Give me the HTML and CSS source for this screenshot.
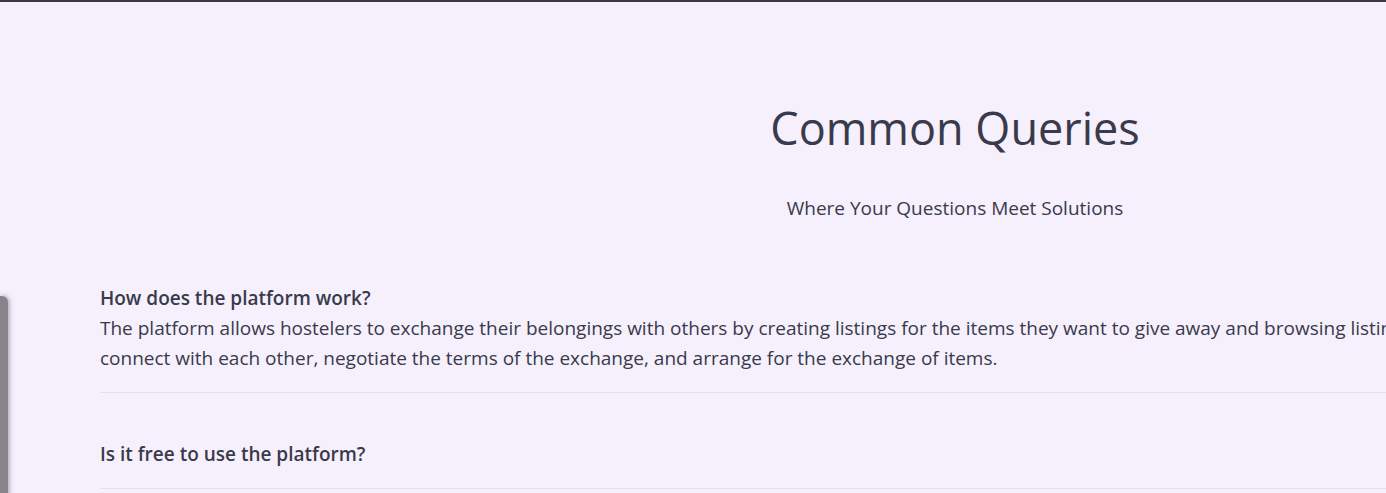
FILE: index.html
```html
<!DOCTYPE html>
<html lang="en">
<head>
<meta charset="utf-8">
<title>Common Queries</title>
<link rel="stylesheet" href="styles.css">
</head>
<body>
<div class="edge-shadow"></div>
<main class="page">
  <header class="hero">
    <h1 class="title">Common Queries</h1>
    <p class="subtitle">Where Your Questions Meet Solutions</p>
  </header>
  <section class="faq">
    <div class="faq-item">
      <h3 class="question">How does the platform work?</h3>
      <p class="answer">The platform allows hostelers to exchange their belongings with others by creating listings for the items they want to give away and browsing listings for the items they need. Users can connect with each other, negotiate the terms of the exchange, and arrange for the exchange of items.</p>
    </div>
    <div class="faq-item">
      <h3 class="question">Is it free to use the platform?</h3>
    </div>
  </section>
</main>
</body>
</html>
```
FILE: styles.css
```css
html, body {
  margin: 0;
  padding: 0;
}
body {
  background: #f5f0fc;
  border-top: 2px solid #3b3a40;
  font-family: "Open Sans", "Noto Sans", sans-serif;
  color: #393a4c;
  overflow: hidden;
  height: 491px;
  position: relative;
}
.edge-shadow {
  position: absolute;
  left: 0;
  top: 294px;
  width: 8px;
  height: 220px;
  background: #85848a;
  border-radius: 0 6px 0 0;
  box-shadow: 1px 0 5px rgba(100, 100, 105, 0.6);
}
.page {
  width: 1910px;
}
.hero {
  text-align: center;
  padding-top: 96px;
}
.title {
  margin: 0;
  font-size: 45px;
  font-weight: 400;
  line-height: 60px;
}
.subtitle {
  margin: 35px 0 0;
  font-size: 19px;
  line-height: 30px;
}
.faq {
  padding: 0 170px 0 100px;
  margin-top: 14px;
}
.faq-item {
  padding: 46px 0 19px;
  border-bottom: 1px solid #e4dfea;
}
.question {
  margin: 0;
  font-size: 19px;
  font-weight: 600;
  line-height: 30px;
}
.answer {
  margin: 0;
  font-size: 19px;
  line-height: 30px;
}
```
